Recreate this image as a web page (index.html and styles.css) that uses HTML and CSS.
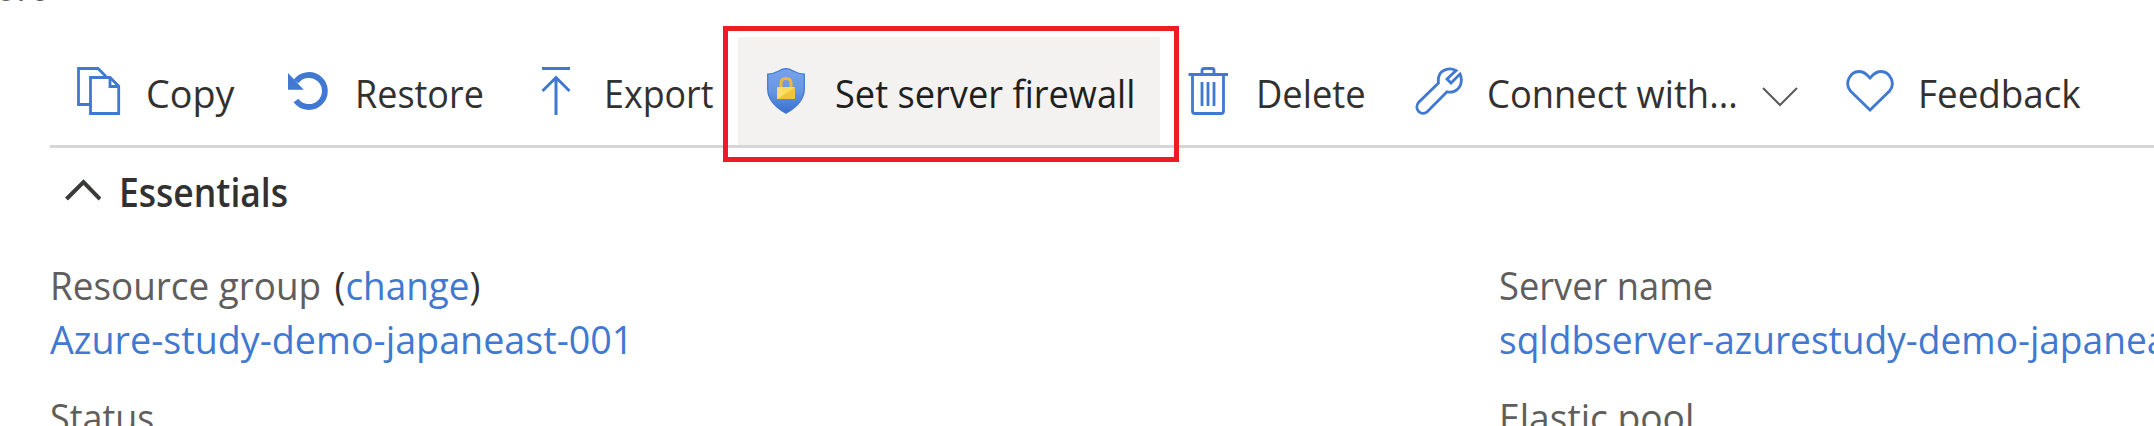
FILE: index.html
```html
<!DOCTYPE html>
<html lang="en">
<head>
<meta charset="utf-8">
<title>SQL database</title>
<link rel="stylesheet" href="styles.css">
</head>
<body>
<main class="page">
  <div class="breadcrumb"><span class="crumb">ort</span></div>
  <nav class="toolbar">
    <button class="command copy">
      <svg class="icon" viewBox="0 0 48 48"><g fill="none" stroke="#4078d2" stroke-width="2.8"><path d="M17 37.5H4.5V1.5H24L32 9.5"/><path d="M16.5 46.5V10.5H36L44.7 19.2V46.5Z"/><path d="M36 10.5V19.5H45"/></g></svg>
      <span class="label">Copy</span>
    </button>
    <button class="command restore">
      <svg class="icon" viewBox="0 0 48 48"><path d="M11 14.5A16 16 0 1 1 11 33.500" fill="none" stroke="#4078d2" stroke-width="5.8"/><path d="M3 6V22.700H18.700Z" fill="#4078d2"/></svg>
      <span class="label">Restore</span>
    </button>
    <button class="command export">
      <svg class="icon" viewBox="0 0 48 48"><path d="M10 1.5H38M24 48V11M10.5 24L24 10.5L37.5 24" fill="none" stroke="#4078d2" stroke-width="3"/></svg>
      <span class="label">Export</span>
    </button>
    <button class="command firewall">
      <svg class="icon" viewBox="0 0 48 48"><defs><linearGradient id="shield" x2="0" y2="1"><stop stop-color="#79a2ec"/><stop offset=".5" stop-color="#6696e2"/><stop offset="1" stop-color="#3870cc"/></linearGradient></defs><path d="M5.7 7C16 7 17 1.7 24 1.7S32 7 42.3 7V22C42.3 35 29 43.5 24 46.3C19 43.5 5.7 35 5.7 22Z" fill="url(#shield)" stroke="#4078d2" stroke-width="1.2"/><path d="M19 21V16Q19 11.5 24 11.5T29 16V21" fill="none" stroke="#efb83c" stroke-width="3"/><rect x="15.2" y="20" width="17.7" height="12" rx=".8" fill="#f6d64b"/><path d="M32.9 20V32H16L24 26Z" fill="#f3c33f"/><path d="M15.2 20L24 26.5L32.9 20Z" fill="#f8dc53"/><path d="M15.2 20V32L24 26Z" fill="#fae16e"/></svg>
      <span class="label">Set server firewall</span>
    </button>
    <button class="command delete">
      <svg class="icon" viewBox="0 0 48 48"><g fill="none" stroke="#4078d2" stroke-width="2.8"><path d="M4.5 7.5H44M18 7V3.5Q18 1.5 20 1.5H28Q30 1.5 30 3.5V7M8.5 8V44Q8.5 46.5 11 46.5H37Q39.5 46.5 39.5 44V8M18 15V39M24 15V39M30 15V39"/></g></svg>
      <span class="label">Delete</span>
    </button>
    <button class="command connect">
      <svg class="icon" viewBox="0 0 48 48"><path d="M41 3.5C34 0 26 3 24 9C23 12 23.2 14 23.5 16L3.5 35.5C-1.5 42 6 50 12.500 44.500L32 24.800C37 26 43 24 45.500 18C47 13.500 46.500 10 45 7L36 16L32 12Z" fill="none" stroke="#4078d2" stroke-width="2.8"/></svg>
      <span class="label">Connect with...</span>
      <svg class="chevron" viewBox="0 0 36 20"><path d="M1 1L18 18L35 1" fill="none" stroke="#5b5a59" stroke-width="2"/></svg>
    </button>
    <button class="command feedback">
      <svg class="icon" viewBox="0 0 48 48"><path d="M24 43L4.500 24C-2 16.500 4 4.500 13 4.500C19 4.500 21 8 24 11C27 8 29 4.500 35 4.500C44 4.500 50 16.500 43.500 24Z" fill="none" stroke="#4078d2" stroke-width="2.8"/></svg>
      <span class="label">Feedback</span>
    </button>
    <div class="highlight"></div>
  </nav>
  <section class="essentials">
    <h2 class="heading"><svg class="caret" viewBox="0 0 36 22"><path d="M1.500 20L18.500 3L35 20" fill="none" stroke="#3b3a39" stroke-width="4"/></svg><span class="title">Essentials</span></h2>
    <div class="properties">
      <div class="column">
        <div class="property"><div class="name resource">Resource group <span class="dark">(<a class="link">change</a>)</span></div><a class="link group-value">Azure-study-demo-japaneast-001</a></div>
        <div class="property"><div class="name status">Status</div></div>
      </div>
      <div class="column">
        <div class="property"><div class="name server">Server name</div><a class="link server-value">sqldbserver-azurestudy-demo-japaneast</a></div>
        <div class="property"><div class="name pool">Elastic pool</div></div>
      </div>
    </div>
  </section>
</main>
</body>
</html>
```
FILE: styles.css
```css
* { box-sizing: border-box; }
body { margin: 0; background: #fff; color: #323130; font-family: "Segoe UI", "Open Sans", "Noto Sans", sans-serif; font-size: 39px; line-height: 54px; overflow: hidden; }
.page { height: 426px; overflow: hidden; }
.breadcrumb { display: flow-root; height: 37px; color: #605e5c; line-height: 40px; }
.crumb { display: block; margin: -34px 0 0 -5px; transform: scaleX(.92); transform-origin: 0 0; }
.toolbar { position: relative; display: flex; height: 111px; margin-left: 50px; border-bottom: 3px solid #d6d6d6; }
.command { display: flex; flex: none; height: 108px; padding: 0; border: 0; background: none; color: inherit; font: inherit; white-space: nowrap; text-align: left; }
.icon { flex: none; width: 48px; height: 48px; margin-top: 30px; }
.label { flex: none; margin: 28.5px 0 0 24px; transform: scaleX(.932); transform-origin: 0 0; }
.copy { width: 212px; padding-left: 24px; }
.copy .label { transform: scaleX(.967); }
.restore { width: 245px; padding-left: 23px; }
.restore .label { margin-left: 22px; transform: scaleX(.922); }
.export { width: 231px; padding-left: 25px; }
.export .label { margin-left: 24px; transform: scaleX(.918); }
.firewall { width: 422px; padding-left: 24px; background: #f3f2f1; color: #201f1e; }
.firewall .label { margin-left: 25px; transform: scaleX(.928); }
.delete { width: 232px; padding-left: 24px; }
.connect { width: 430px; padding-left: 23px; }
.feedback { width: 300px; padding-left: 24px; }
.feedback .label { transform: scaleX(.943); }
.chevron { flex: none; width: 36px; height: 20px; margin: 50px 24px 0 auto; }
.connect .label { width: 275px; }
.highlight { position: absolute; left: 673px; top: -11px; width: 456px; height: 136px; border: 5px solid #ed1c24; }
.essentials { padding-left: 50px; }
.heading { display: flex; margin: 0; padding: 17px 0 0 15px; height: 97px; font-size: 39px; font-weight: 600; line-height: 54px; }
.caret { width: 36px; height: 22px; margin: 14px 18px 0 0; }
.title { transform: scaleX(.91); transform-origin: 0 0; }
.properties { display: grid; grid-template-columns: 1449px 1fr; padding-top: 12.5px; }
.column { white-space: nowrap; }
.property { height: 132px; }
.name { color: #605e5c; transform: scaleX(.945); transform-origin: 0 0; }
.dark { margin-left: 4px; color: #323130; }
.link { display: inline-block; color: #4078d2; transform-origin: 0 0; }
.group-value { transform: scaleX(.966); }
.server-value { transform: scaleX(.951); }
.status { transform: scaleX(.92); }
.server { transform: scaleX(.93); }
.pool { transform: scaleX(.953); }
```
